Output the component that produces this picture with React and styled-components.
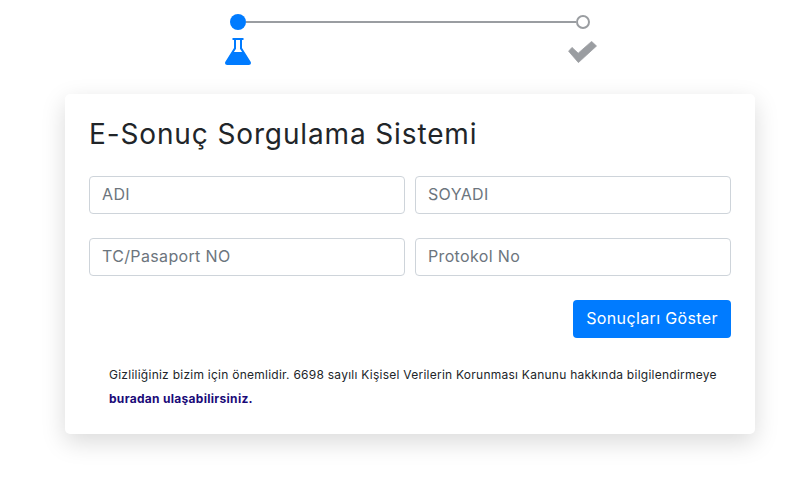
import React from "react";
import styled, { createGlobalStyle } from "styled-components";

const Global = createGlobalStyle`
  * { box-sizing: border-box; }
  html, body { margin: 0; padding: 0; background: #fff; }
  body { width: 810px; height: 498px; overflow: hidden; font-family: "Inter", "Open Sans", sans-serif; }
`;
const Page = styled.div`
  display: flex;
  flex-direction: column;
  align-items: stretch;
  padding: 14px 55px 0 65px;
`;
const Stepper = styled.div`
  display: flex;
  flex-direction: column;
  width: 374px;
  margin-left: 159px;
  height: 80px;
`;
const Track = styled.div`
  display: flex;
  align-items: center;
  height: 16px;
  padding: 0 8px 0 6px;
`;
const Dot = styled.span`
  flex: none;
  border-radius: 50%;
  width: ${(p) => (p.$active ? 16 : 14)}px;
  height: ${(p) => (p.$active ? 16 : 14)}px;
  background: ${(p) => (p.$active ? "#007bff" : "#fff")};
  border: ${(p) => (p.$active ? "none" : "2px solid #9a9da1")};
`;
const Line = styled.span`
  flex: 1;
  height: 2px;
  background: #9a9da1;
`;
const IconRow = styled.div`
  display: flex;
  justify-content: space-between;
  align-items: flex-start;
  margin-top: 8px;
  padding: 0 1px;
`;
const CheckSvg = styled.svg`
  margin-top: 3px;
`;
const Card = styled.main`
  height: 340px;
  background: #fff;
  border-radius: 5px;
  padding: 23px 24px 24px;
  box-shadow: 0 8px 24px rgba(0, 0, 0, 0.15);
`;
const Title = styled.h1`
  margin: 0 0 25px;
  font-size: 28px;
  line-height: 34px;
  font-weight: 400;
  color: #212529;
  letter-spacing: 0.87px;
`;
const Grid = styled.div`
  display: grid;
  grid-template-columns: 1fr 1fr;
  gap: 24px 10px;
`;
const Field = styled.input`
  height: 38px;
  width: 100%;
  border: 1px solid #ced4da;
  border-radius: 4px;
  padding: 0 12px 2px;
  font-family: inherit;
  font-size: 16px;
  letter-spacing: 0.35px;
  color: #495057;
  background: #fff;
  &::placeholder { color: #6c757d; opacity: 1; }
`;
const Actions = styled.div`
  display: flex;
  justify-content: flex-end;
  margin-top: 24px;
`;
const Submit = styled.button`
  height: 38px;
  width: 158px;
  border: 0;
  border-radius: 4px;
  padding: 0 0 2px;
  background: #007bff;
  color: #fff;
  font-family: inherit;
  font-size: 16px;
  letter-spacing: 0.37px;
`;
const Note = styled.p`
  margin: 25px 0 0;
  padding: 0 0 0 20px;
  font-size: 12px;
  line-height: 24px;
  letter-spacing: 0.25px;
  color: #212529;
`;
const Strong = styled.a`
  display: block;
  font-weight: 700;
  color: #1a0a78;
  letter-spacing: 0.3px;
`;

const FlaskIcon = () => (
  <svg width="26" height="27" viewBox="0 0 26 27" aria-hidden="true">
    <path
      fill="#007bff"
      fillRule="evenodd"
      d="M7.5 0H18.5V2H17V10L25.5 23.6C26.6 25.2 25.6 27 23.8 27H2.2C.4 27-.6 25.2.5 23.6L9 10V2H7.5ZM11 2V10.7L8.9 14H17.1L15 10.7V2Z"
    />
  </svg>
);

const CheckIcon = () => (
  <CheckSvg width="29" height="22" viewBox="0 0 29 22" aria-hidden="true">
    <path
      fill="#9a9da1"
      stroke="#9a9da1"
      strokeWidth="0.8"
      strokeLinejoin="round"
      d="M.6 10.2L4 6.4L10.2 12.2L23.6 .4L28.5 5L10.4 21.6Z"
    />
  </CheckSvg>
);

export default function App() {
  return (
    <>
      <Global />
      <Page>
        <Stepper>
          <Track>
            <Dot $active />
            <Line />
            <Dot />
          </Track>
          <IconRow>
            <FlaskIcon />
            <CheckIcon />
          </IconRow>
        </Stepper>
        <Card>
          <Title>E-Sonuç Sorgulama Sistemi</Title>
          <Grid>
            <Field placeholder="ADI" />
            <Field placeholder="SOYADI" />
            <Field placeholder="TC/Pasaport NO" />
            <Field placeholder="Protokol No" />
          </Grid>
          <Actions>
            <Submit>Sonuçları Göster</Submit>
          </Actions>
          <Note>
            Gizliliğiniz bizim için önemlidir. 6698 sayılı Kişisel Verilerin Korunması Kanunu hakkında bilgilendirmeye
            <Strong>buradan ulaşabilirsiniz.</Strong>
          </Note>
        </Card>
      </Page>
    </>
  );
}
